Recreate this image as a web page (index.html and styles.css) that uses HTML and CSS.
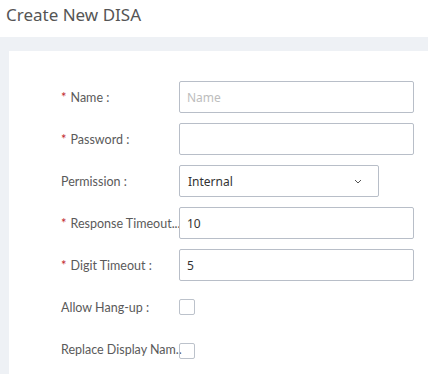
FILE: index.html
```html
<!DOCTYPE html>
<html lang="en">
<head>
    <meta charset="UTF-8">
    <title>Create New DISA</title>
    <link rel="stylesheet" href="styles.css">
</head>
<body>
    <div class="page-header">
        <h1>Create New DISA</h1>
    </div>
    <div class="page-body">
        <div class="card">
            <div class="form-row">
                <label class="form-label"><span class="req">*</span>Name :</label>
                <input class="form-input" type="text" placeholder="Name">
            </div>
            <div class="form-row">
                <label class="form-label"><span class="req">*</span>Password :</label>
                <input class="form-input" type="password">
            </div>
            <div class="form-row">
                <label class="form-label">Permission :</label>
                <div class="form-select">
                    <span>Internal</span>
                    <svg class="caret" width="8" height="5" viewBox="0 0 8 5"><path d="M1 1l3 3 3-3" fill="none" stroke="#555" stroke-width="1"/></svg>
                </div>
            </div>
            <div class="form-row">
                <label class="form-label"><span class="req">*</span>Response Timeout...</label>
                <input class="form-input" type="text" value="10">
            </div>
            <div class="form-row">
                <label class="form-label"><span class="req">*</span>Digit Timeout :</label>
                <input class="form-input" type="text" value="5">
            </div>
            <div class="form-row">
                <label class="form-label">Allow Hang-up :</label>
                <span class="checkbox"></span>
            </div>
            <div class="form-row">
                <label class="form-label">Replace Display Nam..</label>
                <span class="checkbox low"></span>
            </div>
        </div>
    </div>
</body>
</html>
```

FILE: styles.css
```css
body {
    margin: 0;
    height: 374px;
    font-family: "Noto Sans", "Open Sans", sans-serif;
    background: #fff;
    overflow: hidden;
}
.page-header {
    height: 37px;
    background: #fff;
}
.page-header h1 {
    margin: 0;
    padding: 3px 0 0 6px;
    font-size: 17px;
    font-weight: 400;
    color: #555;
    line-height: 24px;
}
.page-body {
    background: #eef1f5;
    padding: 14px 0 0 9px;
    height: 323px;
}
.card {
    background: #fff;
    height: 100%;
    box-sizing: border-box;
    padding: 30px 0 0 52px;
}
.form-row {
    display: flex;
    align-items: center;
    height: 32px;
    margin-bottom: 10px;
}
.form-label {
    width: 118px;
    flex-shrink: 0;
    font-family: Lato, "Noto Sans", sans-serif;
    font-size: 12.5px;
    color: #5a5a5a;
    white-space: nowrap;
}
.req {
    color: #c0262d;
    font-size: 13px;
    margin-right: 4px;
}
.form-input {
    box-sizing: border-box;
    width: 235px;
    height: 32px;
    border: 1px solid #b8bec8;
    border-radius: 2px;
    padding: 0 7px;
    font-family: "Noto Sans", sans-serif;
    font-size: 12px;
    color: #333;
    outline: none;
}
.form-input::placeholder {
    color: #bdbdbd;
}
.form-select {
    box-sizing: border-box;
    width: 200px;
    height: 32px;
    border: 1px solid #b8bec8;
    border-radius: 2px;
    padding: 0 16px 0 8px;
    display: flex;
    align-items: center;
    justify-content: space-between;
    font-size: 12px;
    color: #333;
}
.caret {
    display: block;
}
.checkbox {
    box-sizing: border-box;
    width: 16px;
    height: 16px;
    border: 1px solid #bcc2cb;
    border-radius: 2px;
}
.checkbox.low {
    margin-top: 3px;
}
```
